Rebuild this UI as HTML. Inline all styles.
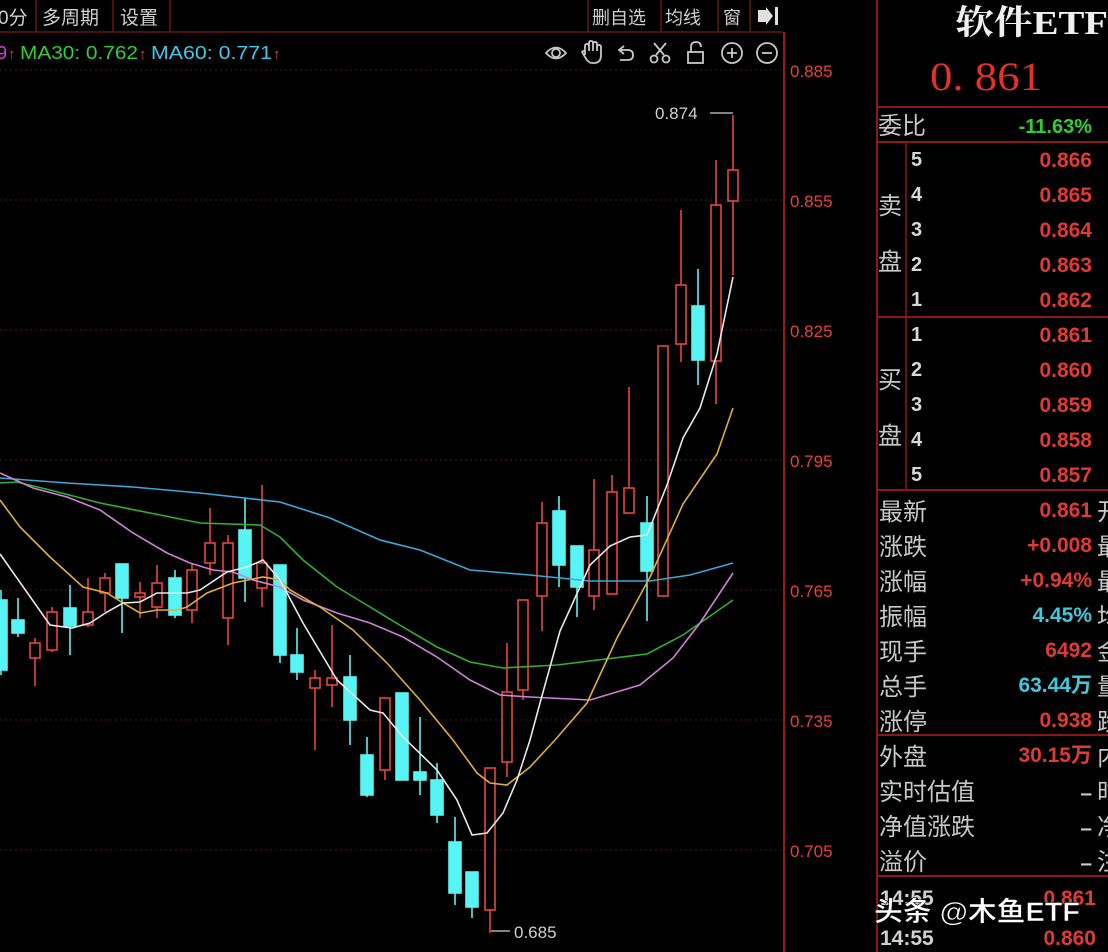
<!DOCTYPE html>
<html><head><meta charset="utf-8"><style>
html,body{margin:0;padding:0;background:#000;width:1108px;height:952px;overflow:hidden}
.t{font-family:"Liberation Sans","Noto Sans CJK SC",sans-serif}
</style></head><body>
<svg width="1108" height="952" viewBox="0 0 1108 952" xmlns="http://www.w3.org/2000/svg" style="display:block">
<rect width="1108" height="952" fill="#000"/>
<!-- toolbar -->
<g stroke="#6a1414" stroke-width="1.5" fill="none">
<line x1="0" y1="32" x2="783" y2="32"/>
<line x1="36" y1="0" x2="36" y2="32"/><line x1="113" y1="0" x2="113" y2="32"/><line x1="170" y1="0" x2="170" y2="32"/>
<line x1="588" y1="0" x2="588" y2="32"/><line x1="661" y1="0" x2="661" y2="32"/><line x1="718" y1="0" x2="718" y2="32"/><line x1="750" y1="0" x2="750" y2="32"/>
</g>
<g class="t" fill="#d0d0d0" font-size="19">
<text x="-2" y="24">0分</text><text x="42" y="24">多周期</text><text x="120" y="24">设置</text>
<text x="592" y="24" font-size="18">删自选</text><text x="665" y="24" font-size="18">均线</text><text x="723" y="24" font-size="18">窗</text>
</g>
<path d="M758 10h8v-3l7 9-7 9v-3h-8z" fill="#e0e0e0"/><rect x="775" y="7" width="3" height="18" fill="#e0e0e0"/>
<!-- legend -->
<g class="t" font-size="18">
<text x="-3" y="59" fill="#e040e0">9</text><text x="8" y="59" fill="#e8403a" font-size="15">↑</text>
<text x="20" y="59" fill="#30d030" textLength="118" lengthAdjust="spacingAndGlyphs">MA30: 0.762</text><text x="139" y="59" fill="#e8403a" font-size="15">↑</text>
<text x="151" y="59" fill="#40c8e8" textLength="121" lengthAdjust="spacingAndGlyphs">MA60: 0.771</text><text x="273" y="59" fill="#e8403a" font-size="15">↑</text>
</g>
<!-- icons -->
<g stroke="#c8c8c8" stroke-width="1.8" fill="none">
<path d="M546 53q10-11 20 0q-10 11-20 0z"/><circle cx="556" cy="53" r="4"/>
<path d="M585 55v-9q0-2 2-2t2 2v5v-8q0-2 2-2t2 2v8v-7q0-2 2-2t2 2v7v-4q0-2 2-2t2 2v8q0 8-7 8h-2q-4 0-7-6l-3-5q1-2 3 0z"/>
<path d="M624 46l-5 4 5 4M619 50h9q5 0 5 5t-5 5h-8"/>
<path d="M654 43l10 12M666 43l-10 12"/><circle cx="654" cy="59" r="3.5"/><circle cx="666" cy="59" r="3.5"/>
<rect x="688" y="52" width="15" height="11"/><path d="M691 52v-5q0-5 5-5t5 5"/>
<circle cx="732" cy="53" r="10"/><path d="M727 53h10M732 48v10"/>
<circle cx="767" cy="53" r="10"/><path d="M762 53h10"/>
</g>
<!-- grid -->
<g stroke="#5a1212" stroke-width="1" stroke-dasharray="2,3">
<line x1="0" y1="70" x2="783" y2="70"/><line x1="0" y1="200" x2="783" y2="200"/><line x1="0" y1="330" x2="783" y2="330"/>
<line x1="0" y1="460" x2="783" y2="460"/><line x1="0" y1="590" x2="783" y2="590"/><line x1="0" y1="720" x2="783" y2="720"/><line x1="0" y1="850" x2="783" y2="850"/>
</g>
<line x1="784" y1="32" x2="784" y2="952" stroke="#9a1818" stroke-width="2"/>
<g class="t" fill="#e8403a" font-size="17">
<text x="790" y="77">0.885</text><text x="790" y="207">0.855</text><text x="790" y="337">0.825</text><text x="790" y="467">0.795</text>
<text x="790" y="597">0.765</text><text x="790" y="727">0.735</text><text x="790" y="857">0.705</text>
</g>
<!-- candles -->
<g stroke-width="1.6">
<g stroke="#e8453c" fill="#000">
<line x1="35" y1="638" x2="35" y2="686"/><rect x="30" y="643" width="10" height="15"/>
<line x1="52" y1="607" x2="52" y2="652"/><rect x="47" y="612" width="10" height="38"/>
<line x1="88" y1="578" x2="88" y2="627"/><rect x="83" y="612" width="10" height="13"/>
<line x1="105" y1="573" x2="105" y2="612"/><rect x="100" y="578" width="10" height="15"/>
<line x1="140" y1="582" x2="140" y2="618"/><rect x="135" y="593" width="10" height="4"/>
<line x1="157" y1="565" x2="157" y2="618"/><rect x="152" y="583" width="10" height="24"/>
<line x1="192" y1="563" x2="192" y2="623"/><rect x="187" y="570" width="10" height="40"/>
<line x1="210" y1="508" x2="210" y2="575"/><rect x="205" y="543" width="10" height="20"/>
<line x1="228" y1="535" x2="228" y2="645"/><rect x="223" y="543" width="10" height="75"/>
<line x1="262" y1="485" x2="262" y2="607"/><rect x="257" y="563" width="10" height="25"/>
<line x1="315" y1="670" x2="315" y2="750"/><rect x="310" y="678" width="10" height="10"/>
<line x1="332" y1="625" x2="332" y2="707"/><rect x="327" y="678" width="10" height="7"/>
<line x1="385" y1="698" x2="385" y2="780"/><rect x="380" y="698" width="10" height="72"/>
<line x1="490" y1="768" x2="490" y2="933"/><rect x="485" y="768" width="10" height="142"/>
<line x1="507" y1="643" x2="507" y2="777"/><rect x="502" y="692" width="10" height="70"/>
<line x1="523" y1="600" x2="523" y2="700"/><rect x="518" y="600" width="10" height="90"/>
<line x1="542" y1="502" x2="542" y2="631"/><rect x="537" y="523" width="10" height="73"/>
<line x1="594" y1="479" x2="594" y2="610"/><rect x="589" y="550" width="10" height="46"/>
<line x1="612" y1="475" x2="612" y2="594"/><rect x="607" y="492" width="10" height="102"/>
<line x1="629" y1="387" x2="629" y2="513"/><rect x="624" y="488" width="10" height="25"/>
<line x1="663" y1="346" x2="663" y2="596"/><rect x="658" y="346" width="10" height="250"/>
<line x1="681" y1="210" x2="681" y2="362"/><rect x="676" y="285" width="10" height="59"/>
<line x1="716" y1="160" x2="716" y2="404"/><rect x="711" y="205" width="10" height="156"/>
<line x1="733" y1="115" x2="733" y2="275"/><rect x="728" y="170" width="10" height="31"/>
</g>
<g stroke="#58f4f4" fill="#58f4f4">
<line x1="1" y1="590" x2="1" y2="675"/><rect x="-5" y="600" width="12" height="70"/>
<line x1="18" y1="598" x2="18" y2="637"/><rect x="12" y="620" width="12" height="13"/>
<line x1="70" y1="585" x2="70" y2="655"/><rect x="64" y="608" width="12" height="18"/>
<line x1="122" y1="564" x2="122" y2="633"/><rect x="116" y="564" width="12" height="34"/>
<line x1="175" y1="570" x2="175" y2="618"/><rect x="169" y="578" width="12" height="37"/>
<line x1="245" y1="498" x2="245" y2="602"/><rect x="239" y="530" width="12" height="48"/>
<line x1="280" y1="565" x2="280" y2="663"/><rect x="274" y="565" width="12" height="90"/>
<line x1="297" y1="628" x2="297" y2="680"/><rect x="291" y="655" width="12" height="17"/>
<line x1="350" y1="655" x2="350" y2="745"/><rect x="344" y="677" width="12" height="43"/>
<line x1="367" y1="737" x2="367" y2="797"/><rect x="361" y="755" width="12" height="40"/>
<rect x="396" y="693" width="12" height="87"/>
<line x1="420" y1="717" x2="420" y2="795"/><rect x="414" y="772" width="12" height="8"/>
<line x1="437" y1="763" x2="437" y2="823"/><rect x="431" y="780" width="12" height="35"/>
<line x1="455" y1="817" x2="455" y2="905"/><rect x="449" y="842" width="12" height="51"/>
<line x1="472" y1="872" x2="472" y2="918"/><rect x="466" y="872" width="12" height="35"/>
<line x1="559" y1="496" x2="559" y2="587"/><rect x="553" y="511" width="12" height="54"/>
<line x1="577" y1="546" x2="577" y2="617"/><rect x="571" y="546" width="12" height="41"/>
<line x1="647" y1="496" x2="647" y2="621"/><rect x="641" y="523" width="12" height="48"/>
<line x1="698" y1="269" x2="698" y2="385"/><rect x="692" y="306" width="12" height="54"/>
</g>
</g>
<!-- MAs -->
<g fill="none" stroke-width="1.6">
<polyline stroke="#3aa8d8" points="0,478 67,483 133,487 200,493 280,502 330,518 380,540 420,550 470,570 530,575 590,581 650,581 690,575 733,563"/>
<polyline stroke="#30b030" points="0,483 17,482 50,490 100,503 150,513 200,523 260,525 280,537 303,560 337,587 370,607 403,627 437,647 470,662 503,668 557,665 647,654 683,635 733,600"/>
<polyline stroke="#d080d8" points="0,473 33,488 67,497 100,510 133,533 167,553 190,563 213,570 233,572 253,580 280,587 303,600 337,613 370,623 403,637 437,657 470,680 500,695 530,697 590,700 640,685 673,658 700,623 733,573"/>
<polyline stroke="#e0b030" points="0,500 20,527 50,557 83,587 107,593 123,603 140,613 157,610 177,610 187,607 207,593 233,583 263,577 280,580 290,590 320,607 353,630 387,663 420,700 453,740 477,773 490,783 507,785 530,767 555,740 587,703 617,638 650,577 683,504 717,454 733,408"/>
<polyline stroke="#e8e8e8" points="0,554 50,625 72,628 90,623 107,612 123,603 140,602 157,593 187,593 200,590 227,572 247,567 263,560 280,580 303,623 337,680 370,710 383,713 403,737 437,770 457,800 472,835 487,833 503,813 517,780 530,740 540,703 560,631 590,565 610,546 630,537 647,535 667,485 683,438 700,408 717,354 733,277"/>
</g>
<g stroke="#d0d0d0" stroke-width="1.3"><line x1="710" y1="113" x2="733" y2="113"/><line x1="491" y1="931" x2="510" y2="931"/></g>
<g class="t" fill="#d0d0d0" font-size="17"><text x="655" y="119">0.874</text><text x="514" y="938">0.685</text></g>
<!-- right panel -->
<g stroke="#8a1818" stroke-width="2">
<line x1="877" y1="0" x2="877" y2="952"/>
<line x1="877" y1="107" x2="1108" y2="107"/><line x1="877" y1="142" x2="1108" y2="142"/>
<line x1="877" y1="317" x2="1108" y2="317"/><line x1="877" y1="490" x2="1108" y2="490"/>
<line x1="877" y1="735" x2="1108" y2="735"/><line x1="877" y1="876" x2="1108" y2="876"/>
<line x1="906" y1="142" x2="906" y2="490" stroke-width="1.5"/>
</g>
<text x="955" y="34" font-family="'Liberation Serif','Noto Serif CJK SC',serif" font-weight="bold" font-size="34" fill="#f0f0f0" textLength="153" lengthAdjust="spacingAndGlyphs">软件ETF</text>
<text x="930" y="90" font-family="'Liberation Serif',serif" font-size="40" fill="#e8302a" textLength="112" lengthAdjust="spacingAndGlyphs">0. 861</text>
<g class="t" fill="#c8c8c8" font-size="24">
<text x="878" y="134">委比</text>
<text x="878" y="214">卖</text><text x="878" y="270">盘</text>
<text x="878" y="388">买</text><text x="878" y="444">盘</text>
<text x="879" y="520">最新</text><text x="879" y="555">涨跌</text><text x="879" y="590">涨幅</text><text x="879" y="625">振幅</text>
<text x="879" y="660">现手</text><text x="879" y="695">总手</text><text x="879" y="730">涨停</text>
<text x="879" y="765">外盘</text><text x="879" y="800">实时估值</text><text x="879" y="835">净值涨跌</text><text x="879" y="870">溢价</text>
</g>
<g class="t" fill="#d8d8d8" font-size="20" font-weight="bold">
<text x="911" y="166">5</text><text x="911" y="201">4</text><text x="911" y="236">3</text><text x="911" y="271">2</text><text x="911" y="306">1</text>
<text x="911" y="341">1</text><text x="911" y="376">2</text><text x="911" y="411">3</text><text x="911" y="446">4</text><text x="911" y="481">5</text>
</g>
<g class="t" font-size="21" font-weight="bold" text-anchor="end" fill="#e03a32">
<text x="1092" y="133" fill="#30d030" font-size="20">-11.63%</text>
<text x="1092" y="167">0.866</text><text x="1092" y="202">0.865</text><text x="1092" y="237">0.864</text><text x="1092" y="272">0.863</text><text x="1092" y="307">0.862</text>
<text x="1092" y="342">0.861</text><text x="1092" y="377">0.860</text><text x="1092" y="412">0.859</text><text x="1092" y="447">0.858</text><text x="1092" y="482">0.857</text>
<text x="1092" y="517">0.861</text><text x="1092" y="552">+0.008</text><text x="1092" y="587">+0.94%</text>
<text x="1092" y="622" fill="#40c8e0">4.45%</text><text x="1092" y="657">6492</text>
<text x="1092" y="692" fill="#40c8e0">63.44万</text><text x="1092" y="727">0.938</text>
<text x="1092" y="762">30.15万</text>
<text x="1092" y="800" fill="#c8c8c8">–</text><text x="1092" y="835" fill="#c8c8c8">–</text><text x="1092" y="870" fill="#c8c8c8">–</text>
<text x="1096" y="905">0.861</text><text x="1096" y="945">0.860</text>
</g>
<g class="t" fill="#c8c8c8" font-size="24">
<text x="1097" y="520">开</text><text x="1097" y="555">最</text><text x="1097" y="590">最</text><text x="1097" y="625">均</text><text x="1097" y="660">金</text><text x="1097" y="695">量</text><text x="1097" y="730">跌</text><text x="1097" y="765">内</text><text x="1097" y="800">时</text><text x="1097" y="835">净</text><text x="1097" y="870">注</text>
</g>
<g class="t" fill="#d0d0d0" font-size="21" font-weight="bold"><text x="880" y="905">14:55</text><text x="880" y="945">14:55</text></g>
<text x="874" y="921" class="t" fill="#ffffff" font-size="27" font-weight="bold" stroke="#000" stroke-width="0.6" textLength="206" lengthAdjust="spacingAndGlyphs">头条 @木鱼ETF</text>
</svg>
</body></html>
